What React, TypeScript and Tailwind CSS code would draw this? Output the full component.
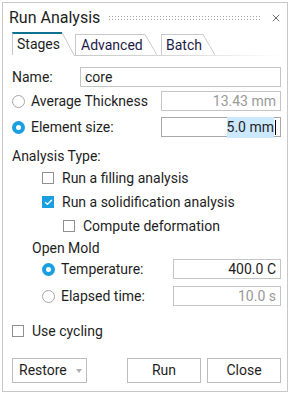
import { Check, X } from 'lucide-react'

function Radio({ checked }: { checked?: boolean }) {
  if (checked) {
    return (
      <span className="flex h-[13px] w-[13px] shrink-0 items-center justify-center rounded-full bg-[#1a9fe0]">
        <span className="h-[5px] w-[5px] rounded-full bg-white" />
      </span>
    )
  }
  return <span className="h-[13px] w-[13px] shrink-0 rounded-full border border-[#a6a6a6] bg-white" />
}

function Box({ checked }: { checked?: boolean }) {
  if (checked) {
    return (
      <span className="flex h-[12px] w-[12px] shrink-0 items-center justify-center bg-[#1a9fe0]">
        <Check className="h-[9px] w-[9px] text-white" strokeWidth={3.5} />
      </span>
    )
  }
  return <span className="h-[12px] w-[12px] shrink-0 border border-[#8f8f8f] bg-white" />
}

function Field({ value, muted, className }: { value: string; muted?: boolean; className?: string }) {
  return (
    <div
      className={`flex h-[20px] items-center justify-end border border-[#c4c4c4] px-[4px] ${
        muted ? 'text-[#999999]' : 'text-[#1e1e1e]'
      } ${className ?? ''}`}
    >
      {value}
    </div>
  )
}

function Tab({ label, active, className }: { label: string; active?: boolean; className: string }) {
  return (
    <div className={`flex h-full ${active ? '' : 'pt-[2px]'}`}>
      <div
        className={`flex items-center border-l border-[#c8c8c8] ${className} ${
          active ? 'border-t-2 border-t-[#10708f] text-[#1e1e1e]' : 'border-t border-t-[#c8c8c8] text-[#1c1c48]'
        }`}
      >
        {label}
      </div>
      <svg width="12" height="100%" viewBox="0 0 12 23" preserveAspectRatio="none" className="shrink-0">
        <line x1="0" y1="0.5" x2="12" y2="23" stroke="#c8c8c8" strokeWidth="1" />
      </svg>
    </div>
  )
}

export default function App() {
  return (
    <div
      className="h-[394px] w-[290px] bg-white p-[2px] text-[14px] text-[#1e1e1e]"
      style={{ fontFamily: 'Roboto, "Liberation Sans", sans-serif' }}
    >
      <div className="flex h-[390px] w-[286px] flex-col border border-[#c8c8c8]">
        {/* title */}
        <div className="flex h-[29px] shrink-0 items-center pl-[6px] pr-[5px]">
          <span className="text-[16px] leading-none">Run Analysis</span>
          <div
            className="ml-[8px] mr-[10px] h-[5px] flex-1"
            style={{
              backgroundImage: 'radial-gradient(circle, #a8a8a8 0.8px, transparent 0.9px)',
              backgroundSize: '3px 3px',
            }}
          />
          <X className="h-[12px] w-[12px] text-[#444444]" strokeWidth={1.6} />
        </div>

        {/* tabs */}
        <div className="flex h-[23px] shrink-0 gap-px pl-[9px] text-[14px]">
          <Tab label="Stages" active className="w-[50px] pl-[4px]" />
          <Tab label="Advanced" className="w-[70px] pl-[5px]" />
          <div className="w-[2px]" />
          <Tab label="Batch" className="w-[42px] pl-[4px]" />
        </div>
        <div className="ml-[71px] mr-[6px] h-px shrink-0 bg-gradient-to-r from-[#c8c8c8] via-[#d8d8d8] to-transparent" />

        {/* content */}
        <div className="flex flex-col pl-[9px] pr-[6px]">
          <div className="mt-[11px] flex h-[20px] items-center">
            <span className="w-[68px]">Name:</span>
            <Field value="core" className="flex-1 !justify-start" />
          </div>

          <div className="mt-[4px] flex h-[20px] items-center">
            <Radio />
            <span className="ml-[6px] flex-1">Average Thickness</span>
            <Field value="13.43 mm" muted className="w-[120px]" />
          </div>

          <div className="mt-[6px] flex h-[20px] items-center">
            <Radio checked />
            <span className="ml-[6px] flex-1">Element size:</span>
            <div className="flex h-[20px] w-[120px] items-center justify-end border border-[#a8a8a8] px-[4px]">
              <span className="bg-[#cce8ff]">5.0 mm</span>
              <span className="ml-px h-[15px] w-px bg-black" />
            </div>
          </div>

          <div className="mt-[10px] flex h-[18px] items-center">Analysis Type:</div>

          <div className="mt-[4px] flex h-[18px] items-center pl-[30px]">
            <Box />
            <span className="ml-[8px]">Run a filling analysis</span>
          </div>
          <div className="mt-[6px] flex h-[18px] items-center pl-[30px]">
            <Box checked />
            <span className="ml-[8px]">Run a solidification analysis</span>
          </div>
          <div className="mt-[6px] flex h-[18px] items-center pl-[51px]">
            <Box />
            <span className="ml-[8px]">Compute deformation</span>
          </div>

          <div className="mt-[5px] flex h-[17px] items-center pl-[20px]">Open Mold</div>

          <div className="mt-[2px] flex h-[20px] items-center pl-[30px]">
            <Radio checked />
            <span className="ml-[6px] flex-1">Temperature:</span>
            <Field value="400.0 C" className="w-[108px]" />
          </div>
          <div className="mt-[7px] flex h-[20px] items-center pl-[30px]">
            <Radio />
            <span className="ml-[6px] flex-1">Elapsed time:</span>
            <Field value="10.0 s" muted className="w-[108px]" />
          </div>

          <div className="mt-[16px] flex h-[18px] items-center">
            <Box />
            <span className="ml-[8px]">Use cycling</span>
          </div>

          <div className="mt-[18px] flex h-[25px] items-stretch">
            <div className="flex w-[75px] items-center border border-[#bdbdbd] pl-[6px]">
              <span>Restore</span>
              <svg width="6" height="4" viewBox="0 0 6 4" className="ml-[9px]">
                <path d="M0 0 L6 0 L3 4 Z" fill="#b0b0b0" />
              </svg>
            </div>
            <div className="ml-auto flex w-[74px] items-center justify-center border border-[#bdbdbd]">Run</div>
            <div className="ml-[6px] flex w-[74px] items-center justify-center border border-[#bdbdbd]">Close</div>
          </div>
        </div>
      </div>
    </div>
  )
}
